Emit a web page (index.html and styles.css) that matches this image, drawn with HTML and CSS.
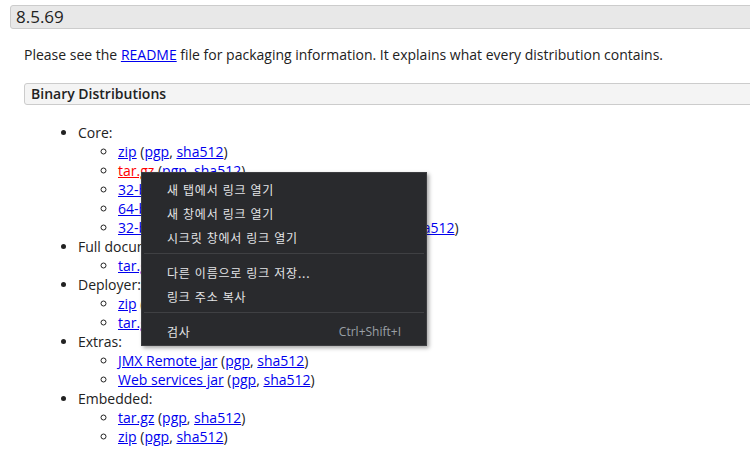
FILE: index.html
```html
<!DOCTYPE html>
<html lang="ko">
<head>
  <meta charset="UTF-8">
  <title>Tomcat 8.5.69</title>
  <link rel="stylesheet" href="styles.css">
</head>
<body>

<div class="section">
  <h3 class="version">8.5.69</h3>

  <div class="section-body">
    <p class="intro">Please see the <a href="#">README</a> file for packaging information. It explains what every distribution contains.</p>

    <h4 class="sub">Binary Distributions</h4>

    <ul class="dist">
      <li>Core:
        <ul>
          <li><a href="#">zip</a> (<a href="#">pgp</a>, <a href="#">sha512</a>)</li>
          <li><a href="#" class="hot">tar.gz</a> (<a href="#">pgp</a>, <a href="#">sha512</a>)</li>
          <li><a href="#">32-bit Windows zip</a> (<a href="#">pgp</a>, <a href="#">sha512</a>)</li>
          <li><a href="#">64-bit Windows zip</a> (<a href="#">pgp</a>, <a href="#">sha512</a>)</li>
          <li><a href="#">32-bit/64-bit Windows Service Installer</a> (<a href="#">pgp</a>, <a href="#">sha512</a>)</li>
        </ul>
      </li>
      <li>Full documentation:
        <ul>
          <li><a href="#">tar.gz</a> (<a href="#">pgp</a>, <a href="#">sha512</a>)</li>
        </ul>
      </li>
      <li>Deployer:
        <ul>
          <li><a href="#">zip</a> (<a href="#">pgp</a>, <a href="#">sha512</a>)</li>
          <li><a href="#">tar.gz</a> (<a href="#">pgp</a>, <a href="#">sha512</a>)</li>
        </ul>
      </li>
      <li>Extras:
        <ul>
          <li><a href="#">JMX Remote jar</a> (<a href="#">pgp</a>, <a href="#">sha512</a>)</li>
          <li><a href="#">Web services jar</a> (<a href="#">pgp</a>, <a href="#">sha512</a>)</li>
        </ul>
      </li>
      <li>Embedded:
        <ul>
          <li><a href="#">tar.gz</a> (<a href="#">pgp</a>, <a href="#">sha512</a>)</li>
          <li><a href="#">zip</a> (<a href="#">pgp</a>, <a href="#">sha512</a>)</li>
        </ul>
      </li>
    </ul>
  </div>
</div>

<!-- Context menu -->
<div class="ctx-menu">
  <div class="ctx-item"><span class="ctx-label">새 탭에서 링크 열기</span></div>
  <div class="ctx-item"><span class="ctx-label">새 창에서 링크 열기</span></div>
  <div class="ctx-item"><span class="ctx-label">시크릿 창에서 링크 열기</span></div>
  <div class="ctx-sep"></div>
  <div class="ctx-item"><span class="ctx-label">다른 이름으로 링크 저장...</span></div>
  <div class="ctx-item"><span class="ctx-label">링크 주소 복사</span></div>
  <div class="ctx-sep"></div>
  <div class="ctx-item"><span class="ctx-label">검사</span> <span class="ctx-key">Ctrl+Shift+I</span></div>
</div>

</body>
</html>
```

FILE: styles.css
```css
* {
  box-sizing: border-box;
}

body {
  margin: 0;
  padding: 5px 0 0 10px;
  background: #fff;
  color: #222;
  font-family: "Open Sans", "Noto Sans", sans-serif;
  font-size: 14px;
  line-height: 19px;
  overflow: hidden;
}

a {
  color: #0000ee;
  text-decoration: underline;
}

a.hot {
  color: #ff0000;
}

/* Headings */
.version {
  margin: 0 -20px 0 0;
  height: 24px;
  padding: 0 5px;
  background: #e8e8e8;
  border: 1px solid #ccc;
  border-radius: 3px;
  font-size: 17px;
  font-weight: normal;
  line-height: 22px;
  color: #222;
}

.section-body {
  padding-left: 14px;
}

.intro {
  margin: 16px 0 19px;
}

.sub {
  margin: 0 -20px 0 0;
  height: 22px;
  padding: 0 6px;
  background: #f4f4f4;
  border: 1px solid #ccc;
  border-radius: 3px;
  font-size: 14px;
  font-weight: 600;
  line-height: 20px;
}

.dist {
  margin: 18px 0 0;
  padding-left: 54px;
}

.dist ul {
  margin: 0;
  padding-left: 40px;
  list-style: circle;
}

/* Context menu */
.ctx-menu {
  position: absolute;
  left: 141px;
  top: 172px;
  width: 286px;
  padding: 4px 1px 2px;
  background: #292a2d;
  border: 1px solid #3c3d40;
  box-shadow: 2px 2px 4px rgba(0, 0, 0, 0.35);
  font-family: "Noto Sans CJK KR", "Noto Sans", sans-serif;
  font-size: 12px;
  color: #e3e4e6;
}

.ctx-item {
  display: flex;
  justify-content: space-between;
  align-items: center;
  height: 24px;
  padding: 0 24px;
}

.ctx-label {
  letter-spacing: 0.8px;
}

.ctx-key {
  color: #9aa0a6;
  font-family: "Open Sans", "Noto Sans", sans-serif;
}

.ctx-sep {
  height: 1px;
  margin: 4px 1px 6px;
  background: #3f4043;
}
```
